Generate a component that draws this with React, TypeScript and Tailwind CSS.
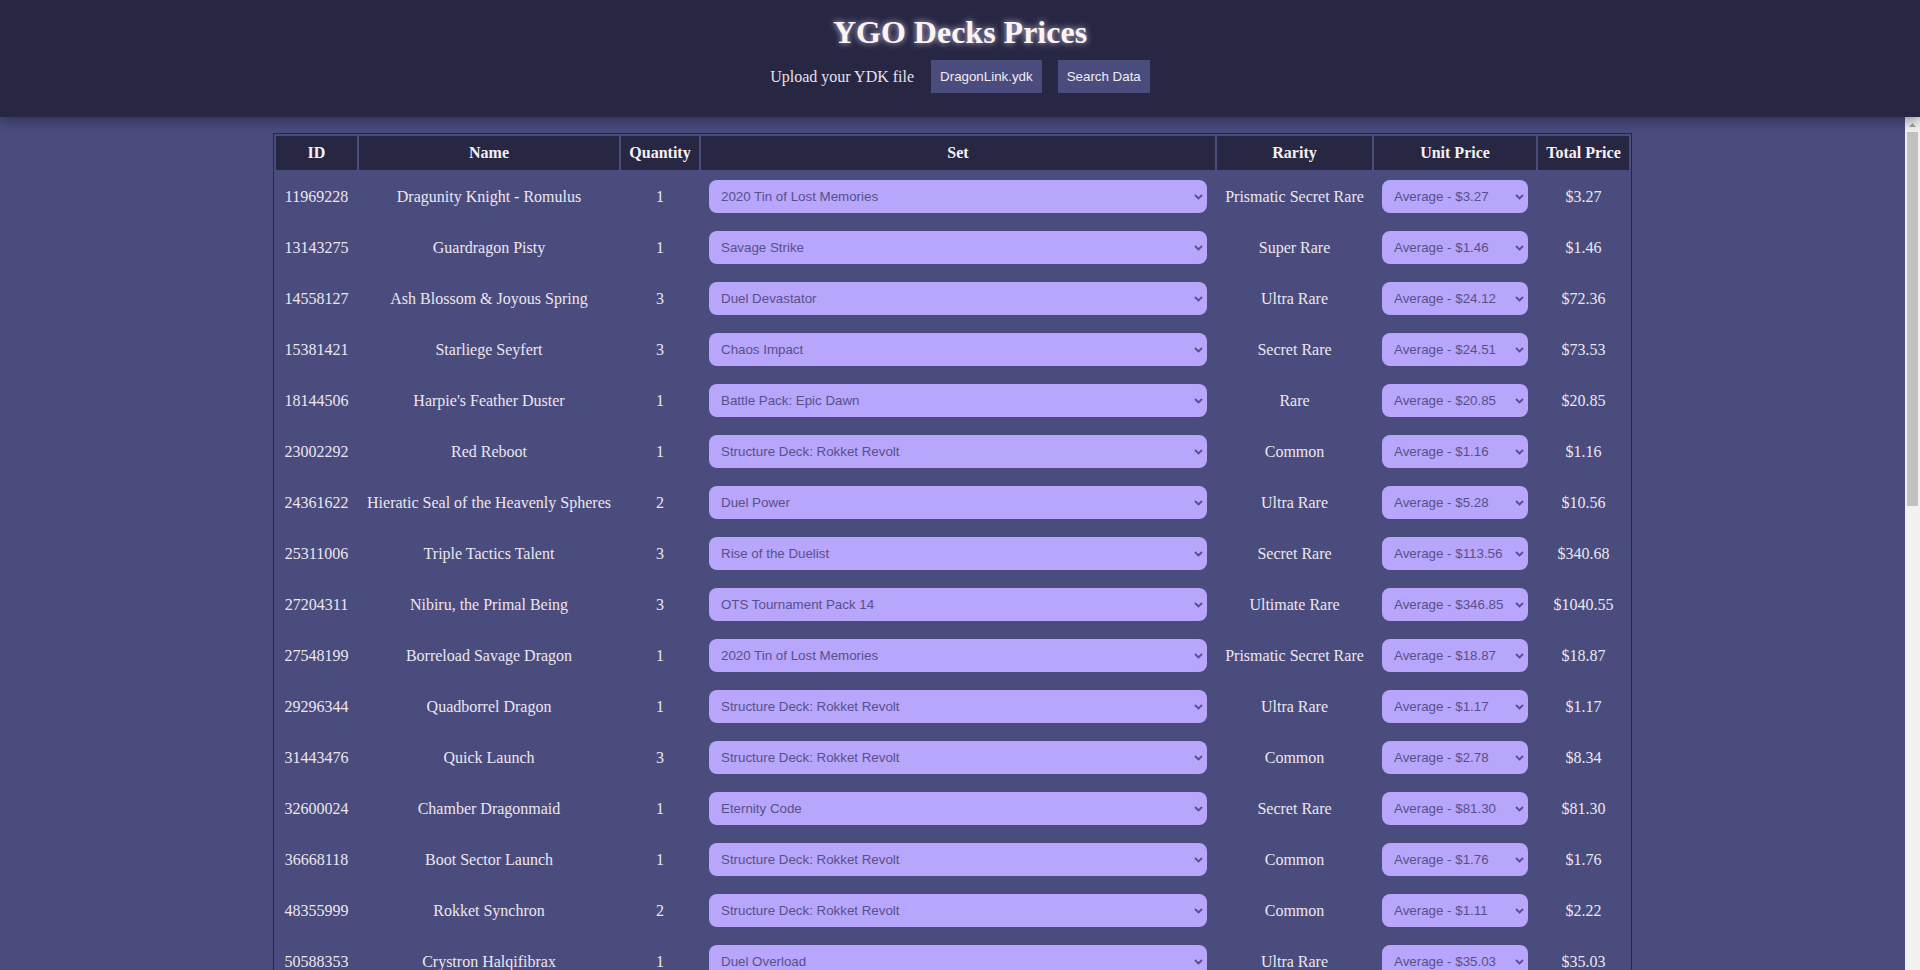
import React from 'react';

interface CardRow {
  id: string;
  name: string;
  qty: number;
  set: string;
  rarity: string;
  unit: string;
  total: string;
}

const rows: CardRow[] = [
  { id: '11969228', name: 'Dragunity Knight - Romulus', qty: 1, set: '2020 Tin of Lost Memories', rarity: 'Prismatic Secret Rare', unit: '3.27', total: '3.27' },
  { id: '13143275', name: 'Guardragon Pisty', qty: 1, set: 'Savage Strike', rarity: 'Super Rare', unit: '1.46', total: '1.46' },
  { id: '14558127', name: 'Ash Blossom & Joyous Spring', qty: 3, set: 'Duel Devastator', rarity: 'Ultra Rare', unit: '24.12', total: '72.36' },
  { id: '15381421', name: 'Starliege Seyfert', qty: 3, set: 'Chaos Impact', rarity: 'Secret Rare', unit: '24.51', total: '73.53' },
  { id: '18144506', name: "Harpie's Feather Duster", qty: 1, set: 'Battle Pack: Epic Dawn', rarity: 'Rare', unit: '20.85', total: '20.85' },
  { id: '23002292', name: 'Red Reboot', qty: 1, set: 'Structure Deck: Rokket Revolt', rarity: 'Common', unit: '1.16', total: '1.16' },
  { id: '24361622', name: 'Hieratic Seal of the Heavenly Spheres', qty: 2, set: 'Duel Power', rarity: 'Ultra Rare', unit: '5.28', total: '10.56' },
  { id: '25311006', name: 'Triple Tactics Talent', qty: 3, set: 'Rise of the Duelist', rarity: 'Secret Rare', unit: '113.56', total: '340.68' },
  { id: '27204311', name: 'Nibiru, the Primal Being', qty: 3, set: 'OTS Tournament Pack 14', rarity: 'Ultimate Rare', unit: '346.85', total: '1040.55' },
  { id: '27548199', name: 'Borreload Savage Dragon', qty: 1, set: '2020 Tin of Lost Memories', rarity: 'Prismatic Secret Rare', unit: '18.87', total: '18.87' },
  { id: '29296344', name: 'Quadborrel Dragon', qty: 1, set: 'Structure Deck: Rokket Revolt', rarity: 'Ultra Rare', unit: '1.17', total: '1.17' },
  { id: '31443476', name: 'Quick Launch', qty: 3, set: 'Structure Deck: Rokket Revolt', rarity: 'Common', unit: '2.78', total: '8.34' },
  { id: '32600024', name: 'Chamber Dragonmaid', qty: 1, set: 'Eternity Code', rarity: 'Secret Rare', unit: '81.30', total: '81.30' },
  { id: '36668118', name: 'Boot Sector Launch', qty: 1, set: 'Structure Deck: Rokket Revolt', rarity: 'Common', unit: '1.76', total: '1.76' },
  { id: '48355999', name: 'Rokket Synchron', qty: 2, set: 'Structure Deck: Rokket Revolt', rarity: 'Common', unit: '1.11', total: '2.22' },
  { id: '50588353', name: 'Crystron Halqifibrax', qty: 1, set: 'Duel Overload', rarity: 'Ultra Rare', unit: '35.03', total: '35.03' },
  { id: '61901281', name: 'Collapserpent', qty: 1, set: 'Dragons of Legend: Unleashed', rarity: 'Ultra Rare', unit: '2.05', total: '2.05' },
  { id: '68464358', name: 'Rokket Tracer', qty: 3, set: 'Structure Deck: Rokket Revolt', rarity: 'Common', unit: '0.89', total: '2.67' },
  { id: '72291078', name: 'Mecha Phantom Beast O-Lion', qty: 1, set: "Battles of Legend: Hero's Revenge", rarity: 'Secret Rare', unit: '4.12', total: '4.12' },
  { id: '73539069', name: 'Striker Dragon', qty: 3, set: 'Structure Deck: Rokket Revolt', rarity: 'Common', unit: '0.45', total: '1.35' },
  { id: '73580471', name: 'Black Rose Dragon', qty: 1, set: 'Legendary Duelists: White Dragon Abyss', rarity: 'Ultra Rare', unit: '3.40', total: '3.40' },
  { id: '83764718', name: 'Monster Reborn', qty: 1, set: 'Legendary Collection', rarity: 'Ultra Rare', unit: '2.31', total: '2.31' },
  { id: '85289965', name: 'Borrelsword Dragon', qty: 1, set: 'Structure Deck: Rokket Revolt', rarity: 'Ultra Rare', unit: '1.55', total: '1.55' },
  { id: '86066372', name: 'Accesscode Talker', qty: 1, set: 'Eternity Code', rarity: 'Secret Rare', unit: '27.60', total: '27.60' },
  { id: '90448279', name: 'Divine Arsenal AA-ZEUS - Sky Thunder', qty: 1, set: 'Phantom Rage', rarity: 'Secret Rare', unit: '12.48', total: '12.48' },
  { id: '94145021', name: 'Droll & Lock Bird', qty: 2, set: "Battles of Legend: Hero's Revenge", rarity: 'Secret Rare', unit: '6.74', total: '13.48' },
  { id: '97268402', name: 'Effect Veiler', qty: 1, set: 'Duel Devastator', rarity: 'Ultra Rare', unit: '3.95', total: '3.95' },
  { id: '99234526', name: 'Wyverburster', qty: 1, set: 'Dragons of Legend: Unleashed', rarity: 'Ultra Rare', unit: '1.98', total: '1.98' },
  { id: '99585850', name: 'Dragon Link Token', qty: 1, set: 'Structure Deck: Rokket Revolt', rarity: 'Common', unit: '0.25', total: '0.25' },
  { id: '05043010', name: 'Firewall Dragon', qty: 1, set: 'Legendary Duelists: Season 1', rarity: 'Ultra Rare', unit: '2.70', total: '2.70' },
  { id: '63288573', name: 'Dark Dragoon', qty: 1, set: 'Rise of the Duelist', rarity: 'Secret Rare', unit: '9.99', total: '9.99' },
  { id: '08949584', name: 'A Hero Lives', qty: 1, set: 'Phantom Rage', rarity: 'Ultra Rare', unit: '1.12', total: '1.12' },
  { id: '14532163', name: 'Lightning Storm', qty: 2, set: 'Rise of the Duelist', rarity: 'Super Rare', unit: '4.45', total: '8.90' },
  { id: '40605147', name: 'Solemn Strike', qty: 1, set: 'Structure Deck: Cyberse Link', rarity: 'Common', unit: '0.95', total: '0.95' },
  { id: '24224830', name: 'Called by the Grave', qty: 1, set: 'Flames of Destruction', rarity: 'Secret Rare', unit: '2.64', total: '2.64' },
];

function Chevron() {
  return (
    <svg
      className="pointer-events-none absolute right-[4px] top-1/2 -translate-y-1/2"
      width="9"
      height="6"
      viewBox="0 0 9 6"
      fill="none"
    >
      <path d="M1 1l3.5 3.5L8 1" stroke="#57518a" strokeWidth="1.8" />
    </svg>
  );
}

function PickList({ value }: { value: string }) {
  return (
    <div className="relative">
      <select
        defaultValue={value}
        className="h-[33px] w-full appearance-none rounded-lg border-0 bg-[#b8a5fc] pl-3 pr-5 font-['Liberation_Sans',Arial,sans-serif] text-[13.33px] text-[#57518a] outline-none"
      >
        <option value={value}>{value}</option>
      </select>
      <Chevron />
    </div>
  );
}

// classic scrollbar look, the real one is hidden in headless
function ScrollRail() {
  return (
    <div className="flex w-[15px] shrink-0 flex-col bg-[#f1f1f1]">
      <div className="flex h-[15px] items-center justify-center">
        <svg width="7" height="4" viewBox="0 0 7 4">
          <path d="M0 4L3.5 0L7 4Z" fill="#a3a3a3" />
        </svg>
      </div>
      <div className="mx-[2px] h-[374px] bg-[#c1c1c1]" />
    </div>
  );
}

export default function App() {
  return (
    <div className="flex h-screen flex-col bg-[#4a4c7d] font-['Liberation_Serif','Times_New_Roman',serif] text-[#ece6ef]">
      {/* Header */}
      <header className="relative z-10 h-[117px] shrink-0 bg-[#282743] text-center shadow-[0_3px_12px_rgba(10,10,30,0.45)]">
        <h1 className="pt-[14px] text-[32px] leading-[37px] font-bold text-[#fcf4f1] [text-shadow:0_0_6px_rgba(225,215,255,0.85)]">
          YGO Decks Prices
        </h1>
        <div className="mt-[9px] flex items-center justify-center">
          <span className="text-base text-[#e6e0ec]">Upload your YDK file</span>
          <button className="ml-[17px] h-[33px] bg-[#4a4c7d] px-[9px] font-['Liberation_Sans',Arial,sans-serif] text-[13.33px] text-[#f1ecf3]">
            DragonLink.ydk
          </button>
          <button className="ml-4 h-[33px] bg-[#4a4c7d] px-[9px] font-['Liberation_Sans',Arial,sans-serif] text-[13.33px] text-[#f1ecf3]">
            Search Data
          </button>
        </div>
      </header>

      <div className="flex min-h-0 flex-1">
        {/* Table */}
        <main className="min-w-0 flex-1 overflow-y-scroll pt-4 pb-4">
          <table className="mx-auto w-[1359px] table-fixed border-separate border-spacing-[2px] border border-[#272643] text-base">
            <thead>
              <tr className="h-[34px] bg-[#272643] font-bold text-[#f6f0f2]">
                <th className="w-[81px] p-0">ID</th>
                <th className="w-[260px] p-0">Name</th>
                <th className="w-[78px] p-0">Quantity</th>
                <th className="w-[514px] p-0">Set</th>
                <th className="w-[155px] p-0">Rarity</th>
                <th className="w-[162px] p-0">Unit Price</th>
                <th className="w-[91px] p-0">Total Price</th>
              </tr>
            </thead>
            <tbody>
              {rows.map((r) => (
                <tr key={r.id} className="h-[49px] text-center">
                  <td className="p-2">{r.id}</td>
                  <td className="p-2">{r.name}</td>
                  <td className="p-2">{r.qty}</td>
                  <td className="p-2">
                    <PickList value={r.set} />
                  </td>
                  <td className="p-2">{r.rarity}</td>
                  <td className="p-2">
                    <PickList value={`Average - $${r.unit}`} />
                  </td>
                  <td className="p-2">${r.total}</td>
                </tr>
              ))}
            </tbody>
          </table>
        </main>
        <ScrollRail />
      </div>
    </div>
  );
}
